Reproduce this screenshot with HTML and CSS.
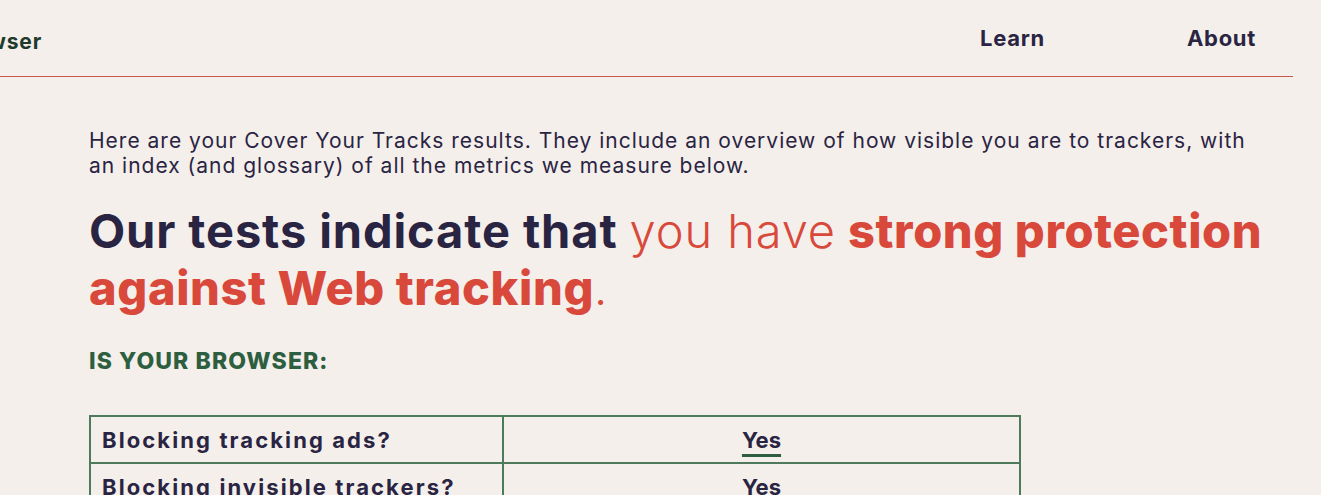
FILE: index.html
```html
<!DOCTYPE html>
<html>
<head>
  <title>Cover Your Tracks</title>
  <meta charset="UTF-8">
  <link rel="stylesheet" href="styles.css">
</head>
<body>
  <div class="headerDiv">
    <div class="logoBox">
      <span class="logo">See how trackers view your browser</span>
    </div>
    <nav class="navLinks">
      <a href="#">Learn</a>
      <a href="#">About</a>
    </nav>
  </div>

  <div class="mainDiv">
    <p class="intro">Here are your Cover Your Tracks results. They include an overview of how visible you are to trackers, with an index (and glossary) of all the metrics we measure below.</p>

    <h1 class="verdict">Our tests indicate that <span class="light">you have</span> <span class="strong">strong protection against Web tracking</span><span class="light">.</span></h1>

    <h2 class="subHead">IS YOUR BROWSER:</h2>

    <table class="resultTable">
      <tr>
        <td class="question">Blocking tracking ads?</td>
        <td class="answer"><a href="#">Yes</a></td>
      </tr>
      <tr>
        <td class="question">Blocking invisible trackers?</td>
        <td class="answer"><a href="#">Yes</a></td>
      </tr>
    </table>
  </div>
</body>
</html>
```
FILE: styles.css
```css
body {
  margin: 0;
  background-color: #f4efeb;
  font-family: Inter, "Noto Sans", sans-serif;
  color: #2a2443;
  overflow: hidden;
}
.headerDiv {
  display: flex;
  align-items: center;
  justify-content: space-between;
  width: 1293px;
  height: 76px;
  border-bottom: 1px solid #c4584c;
}
.logoBox {
  display: flex;
  justify-content: flex-end;
  width: 42px;
  padding-top: 7px;
  white-space: nowrap;
}
.logo {
  font-size: 21px;
  font-weight: 700;
  letter-spacing: 0.8px;
  color: #1e3a2c;
}
.navLinks {
  display: flex;
  gap: 142px;
  padding-right: 37px;
  padding-bottom: 1px;
}
.navLinks a {
  color: #2a2443;
  text-decoration: none;
  font-size: 22px;
  font-weight: 700;
  letter-spacing: 0.7px;
}
.mainDiv {
  padding: 51px 0 0 89px;
  width: 1182px;
}
.intro {
  margin: 0;
  font-size: 21px;
  line-height: 25px;
  letter-spacing: 1px;
}
.verdict {
  margin: 24px 0 0 0;
  font-size: 47px;
  line-height: 57px;
  font-weight: 700;
  letter-spacing: 0.9px;
}
.verdict .light {
  color: #d9493b;
  font-weight: 300;
}
.verdict .strong {
  color: #d9493b;
  font-weight: 800;
  letter-spacing: 0.6px;
}
.subHead {
  margin: 31px 0 0 0;
  font-size: 23px;
  font-weight: 800;
  letter-spacing: 1.1px;
  color: #2e5e40;
}
.resultTable {
  margin-top: 40px;
  width: 932px;
  border-collapse: collapse;
}
.resultTable td {
  border: 2px solid #4e7a5c;
  height: 45px;
  padding: 0 11px;
  font-size: 22px;
  font-weight: 700;
  letter-spacing: 2.1px;
}
.question {
  width: 389px;
}
.answer {
  text-align: center;
}
.resultTable .answer {
  letter-spacing: 0;
}
.answer a {
  color: #2a2443;
  text-decoration: underline;
  text-decoration-color: #2e5e40;
  text-decoration-thickness: 3px;
  text-underline-offset: 6px;
}
```
